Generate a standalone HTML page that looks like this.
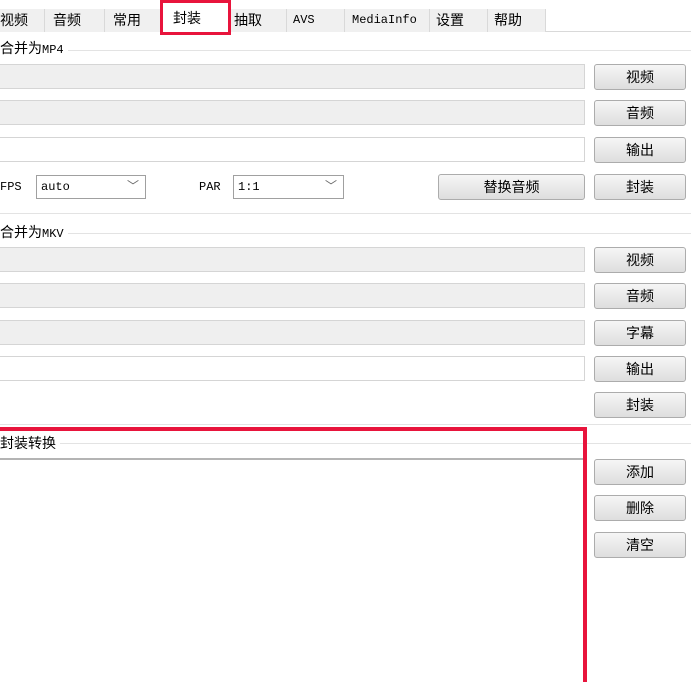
<!DOCTYPE html><html><head><style>
html,body{margin:0;width:691px;height:682px;overflow:hidden}
body{background:#fff;position:relative;font-family:"Liberation Sans","Noto Sans CJK SC",sans-serif;font-size:14px;color:#000}
.a{position:absolute}
.tab{position:absolute;top:9px;height:23px;border-right:1px solid #d9d9d9;background:#f0f0f0;line-height:23px;padding-left:6px;box-sizing:border-box}
.in{position:absolute;left:0;width:585px;height:25px;box-sizing:border-box;border:1px solid #d5d5d5;border-left:none;background:#efefef}
.w{background:#fff}
.btn{position:absolute;left:594px;width:92px;height:26px;box-sizing:border-box;border:1px solid #acacac;border-radius:3px;background:linear-gradient(#f6f6f6,#dedede);text-align:center;line-height:24px;font-size:14px}
.ln{position:absolute;height:1px;background:#e3e3e3}
.mono{font-family:"Liberation Mono","Noto Sans CJK SC",monospace;font-size:12px}
.cb{position:absolute;height:24px;box-sizing:border-box;border:1px solid #a0a0a0;background:#fff;font-family:"Liberation Mono",monospace;font-size:12px;line-height:22px;padding-left:4px}
.cb span{position:absolute;right:6px;top:0;color:#666;font-size:12px}
</style></head><body>
<div class="a" style="left:0;top:31px;width:691px;height:1px;background:#d9d9d9"></div>
<div class="tab" style="left:0;width:45px;padding-left:0">视频</div>
<div class="tab" style="left:45px;width:60px;padding-left:8px">音频</div>
<div class="tab" style="left:105px;width:58px;padding-left:8px">常用</div>
<div class="a" style="left:163px;top:5px;width:65px;height:28px;background:#fff;line-height:26px;padding-left:10px;box-sizing:border-box">封装</div>
<div class="tab" style="left:228px;width:59px">抽取</div>
<div class="tab mono" style="left:287px;width:58px">AVS</div>
<div class="tab mono" style="left:345px;width:85px;padding-left:7px">MediaInfo</div>
<div class="tab" style="left:430px;width:58px">设置</div>
<div class="tab" style="left:488px;width:58px">帮助</div>
<div class="a" style="left:160px;top:0;width:71px;height:35px;box-sizing:border-box;border:3px solid #e8143c"></div>

<div class="ln" style="left:0;top:50px;width:691px"></div>
<div class="a" style="left:0;top:38px;background:#fff;padding-right:4px">合并为<span class="mono">MP4</span></div>
<div class="in" style="top:64px"></div><div class="btn" style="top:64px">视频</div>
<div class="in" style="top:100px"></div><div class="btn" style="top:100px">音频</div>
<div class="in w" style="top:137px"></div><div class="btn" style="top:137px">输出</div>
<div class="a mono" style="left:0;top:180px">FPS</div>
<div class="cb" style="left:36px;top:175px;width:110px">auto<span>﹀</span></div>
<div class="a mono" style="left:199px;top:180px">PAR</div>
<div class="cb" style="left:233px;top:175px;width:111px">1:1<span>﹀</span></div>
<div class="btn" style="left:438px;width:147px;top:174px">替换音频</div>
<div class="btn" style="top:174px">封装</div>

<div class="ln" style="left:0;top:213px;width:691px"></div>
<div class="ln" style="left:0;top:233px;width:691px"></div>
<div class="a" style="left:0;top:222px;background:#fff;padding-right:4px">合并为<span class="mono">MKV</span></div>
<div class="in" style="top:247px"></div><div class="btn" style="top:247px">视频</div>
<div class="in" style="top:283px"></div><div class="btn" style="top:283px">音频</div>
<div class="in" style="top:320px"></div><div class="btn" style="top:320px">字幕</div>
<div class="in w" style="top:356px"></div><div class="btn" style="top:356px">输出</div>
<div class="btn" style="top:392px">封装</div>

<div class="ln" style="left:0;top:424px;width:691px"></div>
<div class="ln" style="left:0;top:443px;width:691px"></div>
<div class="a" style="left:0;top:433px;background:#fff;padding-right:4px">封装转换</div>
<div class="a" style="left:0;top:458px;width:583px;height:2px;background:#b4b4b4"></div>
<div class="btn" style="top:459px">添加</div>
<div class="btn" style="top:495px">删除</div>
<div class="btn" style="top:532px">清空</div>
<div class="a" style="left:0;top:427px;width:587px;height:4px;background:#e8143c"></div>
<div class="a" style="left:583px;top:427px;width:4px;height:255px;background:#e8143c"></div>
</body></html>
